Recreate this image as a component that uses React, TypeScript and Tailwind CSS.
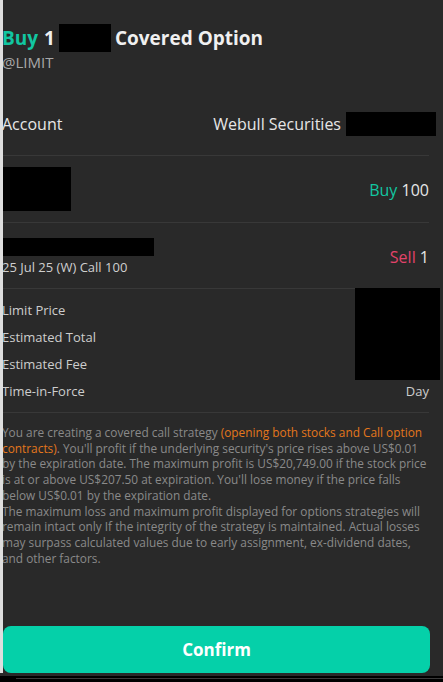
import React from "react";

const font = { fontFamily: '"Open Sans", "Noto Sans", sans-serif' };

function Divider() {
  return <div className="h-px bg-[#383838] w-full" />;
}

export default function App() {
  return (
    <div
      className="relative w-[443px] h-[682px] overflow-hidden bg-[#292929] flex flex-col"
      style={font}
    >
      <div className="absolute left-0 top-0 bottom-[9px] w-[3px] bg-[#dedede] z-10" />

      <div className="flex flex-col pl-[2px] pr-[14px] flex-1">
        {/* Header */}
        <div className="pt-[25px]">
          <div className="h-[26px] flex items-center text-[19px] font-bold text-[#f0f0f0] leading-none">
            <span className="text-[#12c6a1]">Buy</span>
            <span className="ml-[6px]">1</span>
            <span className="inline-block w-[52px] h-[28px] bg-black ml-[4px] mr-[4px]" />
            <span>Covered Option</span>
          </div>
          <div className="h-[22px] flex items-center text-[15px] text-[#a8a8a8]">@LIMIT</div>
        </div>

        {/* Account */}
        <div className="h-[82px] pt-[20px] flex items-center justify-between text-[16px] text-[#e6e6e6]">
          <span>Account</span>
          <div className="flex items-center mr-[-7px]">
            <span>Webull Securities</span>
            <span className="inline-block w-[90px] h-[24px] bg-black ml-[5px]" />
          </div>
        </div>
        <Divider />

        {/* Stock leg */}
        <div className="h-[66px] flex items-center justify-between">
          <div className="w-[69px] h-[44px] bg-black" />
          <div className="text-[16px] text-[#e6e6e6] mt-[2px]">
            <span className="text-[#12c6a1]">Buy</span> 100
          </div>
        </div>
        <Divider />

        {/* Option leg */}
        <div className="h-[65px] flex items-center justify-between">
          <div className="flex flex-col self-start pt-[15px]">
            <div className="w-[152px] h-[18px] bg-black" />
            <div className="mt-[3px] text-[13px] leading-[16px] text-[#cfcfcf]">25 Jul 25 (W) Call 100</div>
          </div>
          <div className="text-[16px] text-[#e6e6e6] self-start mt-[22px]">
            <span className="text-[#e2436a]">Sell</span> 1
          </div>
        </div>
        <Divider />

        {/* Details */}
        <div className="relative pt-[8px] pb-[7px] text-[13px] text-[#cdcdcd]">
          <div className="h-[27px] flex items-center">Limit Price</div>
          <div className="h-[27px] flex items-center">Estimated Total</div>
          <div className="h-[27px] flex items-center">Estimated Fee</div>
          <div className="h-[27px] flex items-center justify-between">
            <span>Time-in-Force</span>
            <span>Day</span>
          </div>
          <div className="absolute right-[-11px] top-[-1px] w-[85px] h-[92px] bg-black" />
        </div>
        <Divider />

        {/* Disclaimer */}
        <div className="pt-[12px] text-[11.85px] leading-[15.7px] text-[#8a8a8a]">
          You are creating a covered call strategy{" "}
          <span className="text-[#e4771c]">(opening both stocks and Call option contracts)</span>. You'll profit if the
          underlying security's price rises above US$0.01 by the expiration date. The maximum profit is US$20,749.00 if
          the stock price is at or above US$207.50 at expiration. You'll lose money if the price falls below US$0.01 by
          the expiration date.
          <br />
          The maximum loss and maximum profit displayed for options strategies will remain intact only If the integrity
          of the strategy is maintained. Actual losses may surpass calculated values due to early assignment,
          ex-dividend dates, and other factors.
        </div>

        <div className="flex-1" />

        <button className="h-[47px] w-[427px] ml-[1px] rounded-[8px] bg-[#05d0a9] text-white text-[17px] font-bold flex items-center justify-center">
          Confirm
        </button>
        <div className="h-[3px]" />
      </div>

      <div className="h-[6px] bg-black relative">
        <div className="absolute left-[16px] right-0 top-[2px] h-px bg-[#3a3a3a]" />
      </div>
    </div>
  );
}
